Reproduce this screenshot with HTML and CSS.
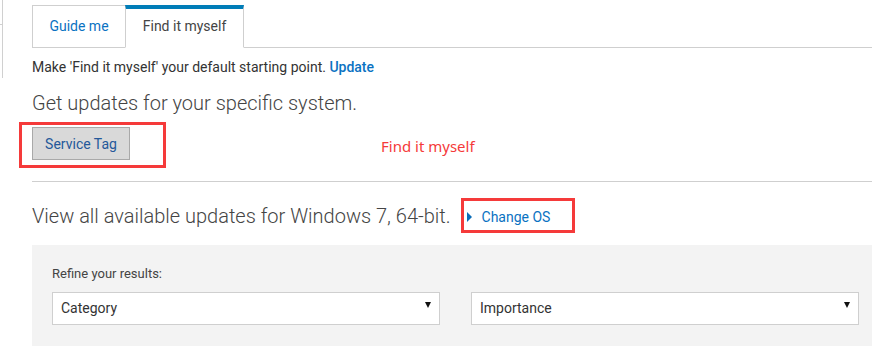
FILE: index.html
```html
<!DOCTYPE html>
<html>
<head>
<meta charset="utf-8">
<link rel="stylesheet" href="styles.css">
</head>
<body>
<div class="page">
  <div class="rail"><span class="rail-tick"></span></div>
  <div class="main">
    <div class="tabs">
      <div class="tab">Guide me</div>
      <div class="tab active">Find it myself</div>
      <div class="tab-fill"></div>
    </div>
    <p class="default-line">Make 'Find it myself' your default starting point. <a class="link-update">Update</a></p>
    <h2 class="heading">Get updates for your specific system.</h2>
    <div class="tag-row">
      <div class="annot-wrap">
        <button class="btn-tag">Service Tag</button>
        <span class="annot-box annot-tag"></span>
      </div>
      <span class="annot-text">Find it myself</span>
    </div>
    <hr class="divider">
    <div class="os-row">
      <h2 class="heading">View all available updates for Windows 7, 64-bit.</h2>
      <div class="annot-wrap os-wrap">
        <a class="change-os"><span class="tri"></span>Change OS</a>
        <span class="annot-box annot-os"></span>
      </div>
    </div>
    <div class="panel">
      <div class="refine-label">Refine your results:</div>
      <div class="selects">
        <div class="select">Category<span class="arrow"></span></div>
        <div class="select">Importance<span class="arrow"></span></div>
      </div>
    </div>
  </div>
</div>
</body>
</html>
```

FILE: styles.css
```css
* { box-sizing: border-box; }
html, body { margin: 0; padding: 0; background: #fff; }
body { font-family: Roboto, "Liberation Sans", sans-serif; color: #333; overflow: hidden; height: 346px; }

.page { display: flex; align-items: flex-start; }
.rail { width: 3px; height: 78px; border-right: 1px solid #d0d0d0; position: relative; flex: none; }
.rail-tick { position: absolute; left: 0; top: 24px; width: 2px; height: 1px; background: #d0d0d0; }
.main { flex: 1; padding-left: 29px; }

.tabs { display: flex; margin-top: 5px; height: 43px; }
.tab { height: 43px; border: 1px solid #cfcfcf; border-right: none; font-size: 14px; line-height: 40px; text-align: center; color: #0a72c2; width: 93px; }
.tab.active { width: 119px; border-top: 4px solid #007db8; border-bottom: 1px solid #fff; border-right: 1px solid #cfcfcf; color: #444; line-height: 34px; }
.tab-fill { flex: 1; border-bottom: 1px solid #cfcfcf; }

.default-line { margin: 9px 0 0; font-size: 14px; line-height: 20px; color: #333; }
.link-update { color: #0a72c2; font-weight: 500; }

.heading { margin: 0; font-weight: 300; font-size: 20px; line-height: 26px; color: #444; }
.default-line + .heading { margin-top: 13px; }

.tag-row { display: flex; align-items: center; margin-top: 11px; height: 33px; }
.annot-wrap { position: relative; }
.btn-tag { display: block; width: 98px; height: 33px; background: #d9d9d9; border: 1px solid #a9a9a9; font-family: Roboto, "Liberation Sans", sans-serif; font-size: 14px; color: #24589a; padding: 0; }
.annot-box { position: absolute; border: 3px solid #f53a3a; pointer-events: none; }
.annot-tag { left: -13px; top: -5px; width: 147px; height: 46px; }
.annot-text { margin-left: 251px; font-family: "Noto Sans", "Open Sans", sans-serif; font-size: 15px; color: #f53a3a; padding-top: 5px; }

.divider { margin: 21px 0 0; border: 0; border-top: 1px solid #cfcfcf; height: 0; }

.os-row { display: flex; align-items: center; margin-top: 21px; height: 26px; }
.os-wrap { margin-left: 16px; height: 18px; }
.change-os { display: flex; align-items: center; height: 18px; font-size: 14px; color: #0a72c2; padding-top: 2px; }
.tri { width: 0; height: 0; border-top: 5px solid transparent; border-bottom: 5px solid transparent; border-left: 5px solid #0a6db8; margin-right: 10px; }
.annot-os { left: -6px; top: -9px; width: 114px; height: 35px; }

.panel { margin-top: 16px; background: #f3f3f3; padding: 21px 13px 40px 20px; }
.refine-label { font-size: 13px; line-height: 16px; color: #444; }
.selects { display: grid; grid-template-columns: 388px 388px; column-gap: 31px; margin-top: 10px; }
.select { position: relative; height: 33px; background: #fff; border: 1px solid #cfcfcf; font-size: 14px; line-height: 31px; padding-left: 8px; color: #333; }
.arrow { position: absolute; right: 8px; top: 9px; width: 0; height: 0; border-left: 3px solid transparent; border-right: 3px solid transparent; border-top: 6px solid #111; }
```
